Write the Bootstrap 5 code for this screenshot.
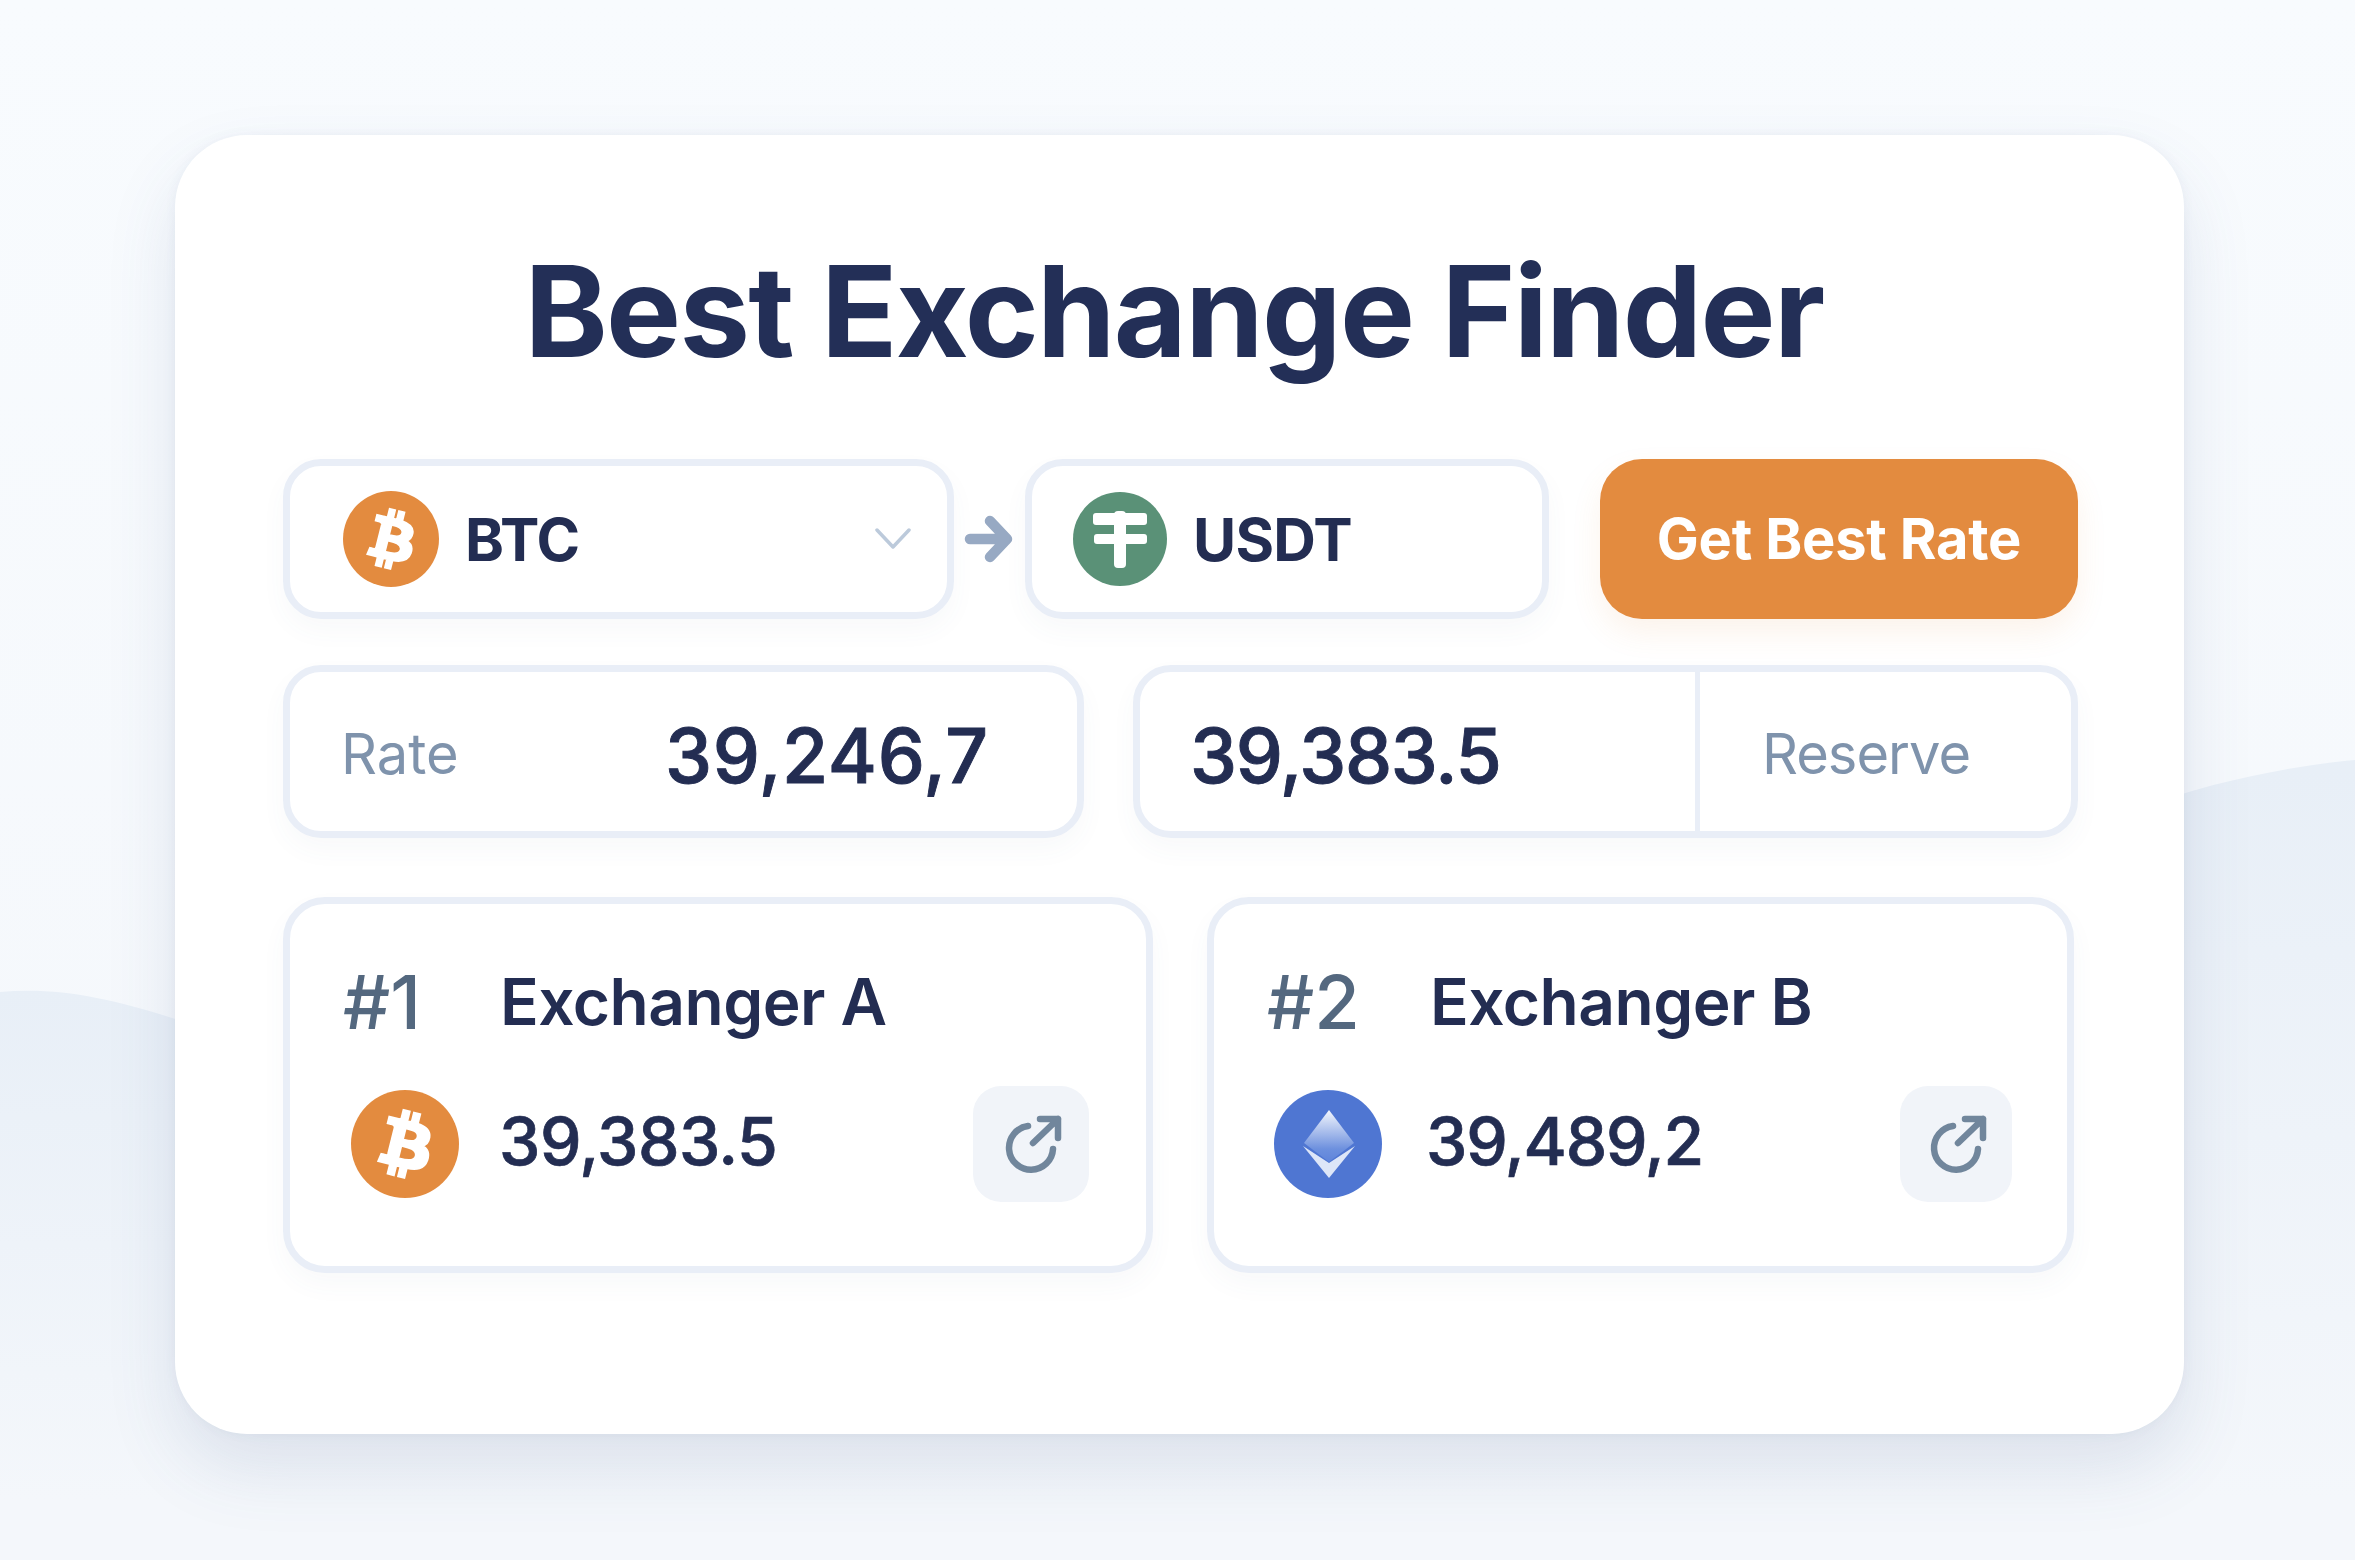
<!DOCTYPE html>
<html lang="en">
<head>
  <meta charset="UTF-8" />
  <title>Best Exchange Finder</title>
  <link href="https://cdn.jsdelivr.net/npm/bootstrap@5.3.0/dist/css/bootstrap.min.css" rel="stylesheet" />
  <style>
    body {
      min-height: 1560px;
      background: linear-gradient(180deg, #f8fbfe 0%, #f4f7fb 100%);
      font-family: "Inter", "Liberation Sans", sans-serif;
      color: #232d52;
      overflow: hidden;
    }
    .bg-hills {
      position: absolute;
      top: 0;
      left: 0;
      width: 2355px;
      height: 1560px;
    }
    .finder-card {
      position: relative;
      width: 2009px;
      height: 1299px;
      margin: 135px 0 0 175px;
      padding: 0 106px 0 108px;
      background: #fff;
      border-radius: 72px;
      box-shadow: 0 34px 70px rgba(70, 92, 140, .13), 0 0 12px rgba(70, 92, 140, .06);
    }
    .finder-title {
      height: 324px;
      margin: 0;
      padding-top: 103px;
      padding-right: 13px;
      font-size: 126px;
      line-height: 146px;
      font-weight: 700;
      letter-spacing: -1.7px;
      text-align: center;
      color: #232f57;
    }
    .field-box {
      background: #fff;
      border: 7px solid #e9eef7;
      border-radius: 38px;
      box-shadow: 0 12px 26px rgba(70, 92, 140, .04);
    }
    .row-pair { height: 160px; }
    .row-rate { height: 173px; margin-top: 46px; }
    .row-cards { margin-top: 59px; }
    .box-from { width: 671px; height: 160px; padding: 0 36px 0 53px; }
    .box-to { width: 524px; height: 160px; padding: 0 0 0 41px; }
    .pair-arrow { width: 71px; padding-left: 10px; }
    .coin-name { font-size: 59px; font-weight: 700; line-height: 1; margin-left: 26px; letter-spacing: -.8px; }
    .rate-btn {
      width: 478px;
      height: 160px;
      margin-left: 51px;
      border: 0;
      border-radius: 42px;
      background: #e38b3f;
      color: #fff;
      font-size: 56px;
      font-weight: 700;
      letter-spacing: -.2px;
      box-shadow: 0 14px 30px rgba(227, 139, 63, .10);
    }
    .rate-btn:hover { background: #d97f33; color: #fff; }
    .box-rate { width: 801px; height: 173px; padding: 0 0 0 51px; }
    .box-reserve { width: 945px; height: 173px; margin-left: 49px; }
    .reserve-value { width: 560px; height: 100%; padding-left: 50px; border-right: 5px solid #e9eef7; }
    .field-label { font-size: 56px; color: #7f93ac; line-height: 1; padding-top: 5px; }
    .rate-label { width: 324px; }
    .reserve-label { margin-left: 62px; letter-spacing: -1px; }
    .big-value { font-size: 75px; font-weight: 500; -webkit-text-stroke: .9px #232d52; line-height: 1; padding-top: 7px; }
    .value-rate { letter-spacing: .7px; }
    .value-reserve { letter-spacing: -1.3px; }
    .rank-card {
      height: 376px;
      border: 7px solid #e9eef7;
      border-radius: 42px;
      box-shadow: 0 12px 26px rgba(70, 92, 140, .04);
      padding: 0 0 0 53px;
    }
    .rank-a { width: 870px; }
    .rank-b { width: 867px; margin-left: 54px; }
    .rank-head { margin-top: 63px; height: 70px; }
    .rank-no { width: 157px; font-size: 74px; font-weight: 500; color: #54687f; line-height: 1; }
    .rank-b .rank-no { width: 163px; }
    .rank-name { font-size: 64px; font-weight: 600; line-height: 1; letter-spacing: -.5px; }
    .rank-body { margin-top: 49px; padding-left: 8px; }
    .rank-body > svg { flex-shrink: 0; }
    .rank-value { width: 474px; margin-left: 40px; padding-bottom: 6px; font-size: 66px; font-weight: 500; -webkit-text-stroke: .7px #232d52; line-height: 1; letter-spacing: -.5px; }
    .rank-b .rank-body { padding-left: 7px; }
    .rank-b .rank-value { width: 474px; margin-left: 44px; letter-spacing: -1.2px; }
    .open-btn {
      flex-shrink: 0;
      width: 116px;
      height: 116px;
      padding: 0;
      border: 0;
      border-radius: 28px;
      background: #f1f4f9;
    }
    .rank-b .open-btn { width: 112px; }
    .open-btn:hover { background: #e8edf5; }
    .open-btn svg { display: block; }
    .rank-b .open-btn svg { margin-left: -2px; }
  </style>
</head>
<body>

  <!-- Soft hills behind the card -->
  <svg class="bg-hills" viewBox="0 0 2355 1560" aria-hidden="true">
    <defs>
      <linearGradient id="hillLeft" gradientUnits="userSpaceOnUse" x1="0" y1="990" x2="0" y2="1500">
        <stop offset="0" stop-color="#e8eff7" />
        <stop offset="1" stop-color="#f4f7fb" />
      </linearGradient>
      <linearGradient id="hillRight" gradientUnits="userSpaceOnUse" x1="0" y1="770" x2="0" y2="1500">
        <stop offset="0" stop-color="#e8eff7" />
        <stop offset="1" stop-color="#f4f7fb" />
      </linearGradient>
    </defs>
    <path d="M0 992C70 986 130 1003 220 1034L1200 1034L1200 1560L0 1560Z" fill="url(#hillLeft)" />
    <path d="M1200 808L2140 808C2210 782 2290 766 2355 760L2355 1560L1200 1560Z" fill="url(#hillRight)" />
  </svg>

  <div class="finder-card">
    <h1 class="finder-title">Best Exchange Finder</h1>

    <!-- Pair -->
    <div class="d-flex align-items-center row-pair">
      <div class="field-box box-from d-flex align-items-center">
        <svg width="96" height="96" viewBox="0 0 32 32">
          <circle cx="16" cy="16" r="16" fill="#e38b3f" />
          <path fill="#fff" stroke="#fff" stroke-width=".7" d="M23.189 14.02c.314-2.096-1.283-3.223-3.465-3.975l.708-2.84-1.728-.43-.69 2.765c-.454-.114-.92-.22-1.385-.326l.695-2.783L15.596 6l-.708 2.839c-.376-.086-.746-.17-1.104-.26l.002-.009-2.384-.595-.46 1.846s1.283.294 1.256.312c.7.175.826.638.805 1.006l-.806 3.235c.048.012.11.03.18.057l-.183-.045-1.13 4.532c-.086.212-.303.531-.793.41.018.025-1.256-.313-1.256-.313l-.858 1.978 2.25.561c.418.105.828.215 1.231.318l-.715 2.872 1.727.43.708-2.84c.472.127.93.245 1.378.357l-.706 2.828 1.728.43.715-2.866c2.948.558 5.164.333 6.097-2.333.752-2.146-.037-3.385-1.588-4.192 1.13-.26 1.98-1.003 2.207-2.538zm-3.95 5.538c-.533 2.147-4.148.986-5.32.695l.95-3.805c1.172.293 4.929.872 4.37 3.11zm.535-5.569c-.487 1.953-3.495.96-4.47.717l.86-3.45c.975.243 4.118.696 3.61 2.733z" />
        </svg>
        <span class="coin-name">BTC</span>
        <svg class="ms-auto" width="36" height="22" viewBox="0 0 36 22">
          <path d="M2 2L18 19L34 2" fill="none" stroke="#bccadb" stroke-width="3.5" stroke-linecap="round" stroke-linejoin="round" />
        </svg>
      </div>
      <div class="pair-arrow">
        <svg class="d-block" width="50" height="50" viewBox="0 0 50 50">
          <path d="M6 25H40M26 7L43 25L26 43" fill="none" stroke="#97a9c3" stroke-width="10.5" stroke-linecap="round" stroke-linejoin="round" />
        </svg>
      </div>
      <div class="field-box box-to d-flex align-items-center">
        <svg width="94" height="94" viewBox="0 0 94 94">
          <circle cx="47" cy="47" r="47" fill="#5a9177" />
          <rect x="20" y="21" width="54" height="12" rx="3" fill="#fff" />
          <rect x="21" y="42" width="53" height="10" rx="3" fill="#fff" />
          <rect x="41" y="19" width="12" height="57" rx="4" fill="#fff" />
        </svg>
        <span class="coin-name">USDT</span>
      </div>
      <button class="btn rate-btn" type="button">Get Best Rate</button>
    </div>

    <!-- Rate and reserve -->
    <div class="d-flex row-rate">
      <div class="field-box box-rate d-flex align-items-center">
        <span class="field-label rate-label">Rate</span>
        <span class="big-value value-rate">39,246,7</span>
      </div>
      <div class="field-box box-reserve d-flex align-items-center">
        <div class="reserve-value d-flex align-items-center">
          <span class="big-value value-reserve">39,383.5</span>
        </div>
        <span class="field-label reserve-label">Reserve</span>
      </div>
    </div>

    <!-- Exchangers -->
    <div class="d-flex row-cards">
      <div class="card rank-card rank-a">
        <div class="rank-head d-flex align-items-center">
          <span class="rank-no">#1</span>
          <span class="rank-name">Exchanger A</span>
        </div>
        <div class="rank-body d-flex align-items-center">
          <svg width="108" height="108" viewBox="0 0 32 32">
            <circle cx="16" cy="16" r="16" fill="#e38b3f" />
            <path fill="#fff" stroke="#fff" stroke-width=".7" d="M23.189 14.02c.314-2.096-1.283-3.223-3.465-3.975l.708-2.84-1.728-.43-.69 2.765c-.454-.114-.92-.22-1.385-.326l.695-2.783L15.596 6l-.708 2.839c-.376-.086-.746-.17-1.104-.26l.002-.009-2.384-.595-.46 1.846s1.283.294 1.256.312c.7.175.826.638.805 1.006l-.806 3.235c.048.012.11.03.18.057l-.183-.045-1.13 4.532c-.086.212-.303.531-.793.41.018.025-1.256-.313-1.256-.313l-.858 1.978 2.25.561c.418.105.828.215 1.231.318l-.715 2.872 1.727.43.708-2.84c.472.127.93.245 1.378.357l-.706 2.828 1.728.43.715-2.866c2.948.558 5.164.333 6.097-2.333.752-2.146-.037-3.385-1.588-4.192 1.13-.26 1.98-1.003 2.207-2.538zm-3.95 5.538c-.533 2.147-4.148.986-5.32.695l.95-3.805c1.172.293 4.929.872 4.37 3.11zm.535-5.569c-.487 1.953-3.495.96-4.47.717l.86-3.45c.975.243 4.118.696 3.61 2.733z" />
          </svg>
          <span class="rank-value">39,383.5</span>
          <button class="btn open-btn" type="button" aria-label="Open Exchanger A">
            <svg width="116" height="116" viewBox="0 0 116 116">
              <path d="M55 40A22 22 0 1 0 80 63M60 57L85 33M67 33H85V52" fill="none" stroke="#71869c" stroke-width="6.5" stroke-linecap="round" stroke-linejoin="round" />
            </svg>
          </button>
        </div>
      </div>
      <div class="card rank-card rank-b">
        <div class="rank-head d-flex align-items-center">
          <span class="rank-no">#2</span>
          <span class="rank-name">Exchanger B</span>
        </div>
        <div class="rank-body d-flex align-items-center">
          <svg width="108" height="108" viewBox="0 0 108 108">
            <defs>
              <linearGradient id="ethTop" x1="0" y1="0" x2="0" y2="1">
                <stop offset="0" stop-color="#f4f7fd" />
                <stop offset=".75" stop-color="#6d90de" />
                <stop offset="1" stop-color="#5f84da" />
              </linearGradient>
            </defs>
            <circle cx="54" cy="54" r="54" fill="#4f76d2" />
            <path d="M55 20L80 53L55 72L30 53Z" fill="url(#ethTop)" />
            <path d="M29 56L55 73L81 56L55 88Z" fill="#dde6f8" />
          </svg>
          <span class="rank-value">39,489,2</span>
          <button class="btn open-btn" type="button" aria-label="Open Exchanger B">
            <svg width="116" height="116" viewBox="0 0 116 116">
              <path d="M55 40A22 22 0 1 0 80 63M60 57L85 33M67 33H85V52" fill="none" stroke="#71869c" stroke-width="6.5" stroke-linecap="round" stroke-linejoin="round" />
            </svg>
          </button>
        </div>
      </div>
    </div>
  </div>

  <script src="https://cdn.jsdelivr.net/npm/bootstrap@5.3.0/dist/js/bootstrap.bundle.min.js"></script>
</body>
</html>
